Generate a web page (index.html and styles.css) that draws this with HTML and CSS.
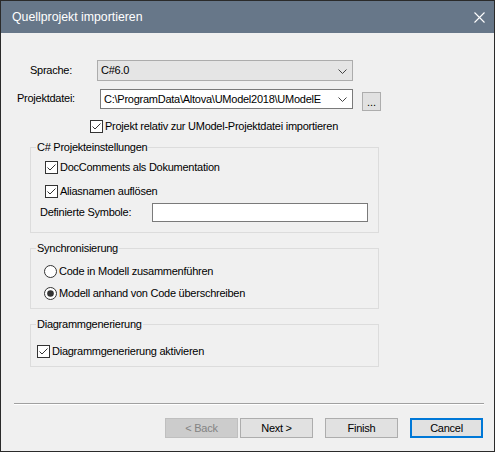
FILE: index.html
```html
<!DOCTYPE html>
<html lang="de">
<head>
<meta charset="utf-8">
<title>Quellprojekt importieren</title>
<link rel="stylesheet" href="styles.css">
</head>
<body>
<div class="window">
  <div class="titlebar">
    <span class="title">Quellprojekt importieren</span>
    <svg class="close" width="11" height="11" viewBox="0 0 11 11"><path d="M0.5 0.5 L10.5 10.5 M10.5 0.5 L0.5 10.5" stroke="#fff" stroke-width="1.1" fill="none"/></svg>
  </div>
  <div class="content">
    <div class="row row-lang">
      <span class="lbl lbl-lang">Sprache:</span>
      <div class="combo combo-lang">
        <span class="combo-text">C#6.0</span>
        <svg class="chev" width="9" height="5" viewBox="0 0 9 5"><path d="M0.5 0.5 L4.5 4.5 L8.5 0.5" stroke="#444" stroke-width="1" fill="none"/></svg>
      </div>
    </div>
    <div class="row row-file">
      <span class="lbl lbl-file">Projektdatei:</span>
      <div class="combo combo-file">
        <span class="combo-text">C:\ProgramData\Altova\UModel2018\UModelE</span>
        <svg class="chev" width="9" height="5" viewBox="0 0 9 5"><path d="M0.5 0.5 L4.5 4.5 L8.5 0.5" stroke="#444" stroke-width="1" fill="none"/></svg>
      </div>
      <span class="btn btn-browse">...</span>
    </div>
    <div class="check check-relative">
      <svg class="cb" width="13" height="13" viewBox="0 0 13 13"><rect x="0.5" y="0.5" width="12" height="12" fill="#fff" stroke="#333"/><path d="M2.5 6.5 L5 9 L10.5 3.5" stroke="#333" stroke-width="1" fill="none"/></svg>
      <span>Projekt relativ zur UModel-Projektdatei importieren</span>
    </div>

    <fieldset class="group group-cs">
      <legend>C# Projekteinstellungen</legend>
      <div class="group-body body-cs">
        <div class="check check-indent">
          <svg class="cb" width="13" height="13" viewBox="0 0 13 13"><rect x="0.5" y="0.5" width="12" height="12" fill="#fff" stroke="#333"/><path d="M2.5 6.5 L5 9 L10.5 3.5" stroke="#333" stroke-width="1" fill="none"/></svg>
          <span>DocComments als Dokumentation</span>
        </div>
        <div class="check check-indent check-second">
          <svg class="cb" width="13" height="13" viewBox="0 0 13 13"><rect x="0.5" y="0.5" width="12" height="12" fill="#fff" stroke="#333"/><path d="M2.5 6.5 L5 9 L10.5 3.5" stroke="#333" stroke-width="1" fill="none"/></svg>
          <span>Aliasnamen auflösen</span>
        </div>
        <div class="row row-symbols">
          <span class="lbl lbl-symbols">Definierte Symbole:</span>
          <div class="textbox"></div>
        </div>
      </div>
    </fieldset>

    <fieldset class="group group-sync">
      <legend>Synchronisierung</legend>
      <div class="group-body body-sync">
        <div class="check">
          <svg class="cb" width="13" height="13" viewBox="0 0 13 13"><circle cx="6.5" cy="6.5" r="6" fill="#fff" stroke="#333"/></svg>
          <span>Code in Modell zusammenführen</span>
        </div>
        <div class="check check-radio2">
          <svg class="cb" width="13" height="13" viewBox="0 0 13 13"><circle cx="6.5" cy="6.5" r="6" fill="#fff" stroke="#333"/><circle cx="6.5" cy="6.5" r="3.3" fill="#333"/></svg>
          <span>Modell anhand von Code überschreiben</span>
        </div>
      </div>
    </fieldset>

    <fieldset class="group group-diag">
      <legend>Diagrammgenerierung</legend>
      <div class="group-body body-diag">
        <div class="check">
          <svg class="cb" width="13" height="13" viewBox="0 0 13 13"><rect x="0.5" y="0.5" width="12" height="12" fill="#fff" stroke="#333"/><path d="M2.5 6.5 L5 9 L10.5 3.5" stroke="#333" stroke-width="1" fill="none"/></svg>
          <span>Diagrammgenerierung aktivieren</span>
        </div>
      </div>
    </fieldset>

    <div class="separator"></div>

    <div class="buttons">
      <span class="btn btn-action btn-disabled">&lt; Back</span>
      <span class="btn btn-action btn-next">Next &gt;</span>
      <span class="btn btn-action btn-finish">Finish</span>
      <span class="btn btn-action btn-default">Cancel</span>
    </div>
  </div>
</div>
</body>
</html>
```

FILE: styles.css
```css
html, body {
  margin: 0;
  padding: 0;
  background: #ffffff;
}

body {
  font-family: "Liberation Sans", Arial, sans-serif;
  font-size: 11px;
  letter-spacing: -0.25px;
  color: #000;
}

.window {
  box-sizing: border-box;
  width: 495px;
  height: 452px;
  border: 1px solid #2a2a2a;
  background: #f0f0f0;
  display: flex;
  flex-direction: column;
}

.titlebar {
  height: 32px;
  background: #677789;
  display: flex;
  align-items: center;
  justify-content: space-between;
  padding: 0 9px 0 11px;
  flex-shrink: 0;
}

.title {
  color: #fff;
  font-size: 12.3px;
  letter-spacing: 0;
  line-height: 32px;
}

.close {
  display: block;
  margin-top: 1px;
}

.content {
  display: flex;
  flex-direction: column;
  flex: 1;
}

.row {
  display: flex;
  align-items: center;
}

.lbl {
  line-height: 13px;
  white-space: nowrap;
}

.row-lang {
  margin-top: 27px;
}

.lbl-lang {
  margin-left: 29px;
  width: 67px;
}

.row-file {
  margin-top: 8px;
  align-items: flex-start;
  height: 21px;
}

.lbl-file {
  margin-left: 16px;
  width: 83px;
  margin-top: 3px;
}

.combo {
  box-sizing: border-box;
  display: flex;
  align-items: center;
  justify-content: space-between;
  padding: 0 5px 0 3px;
}

.combo-lang {
  width: 256px;
  height: 21px;
  background: #e5e5e5;
  border: 1px solid #acacac;
}

.combo-file {
  width: 253px;
  height: 20px;
  background: #fff;
  border: 1px solid #7a7a7a;
}

.combo-text {
  line-height: 13px;
  white-space: nowrap;
}

.chev {
  display: block;
  flex-shrink: 0;
  margin-top: 1px;
}

.btn {
  box-sizing: border-box;
  display: flex;
  align-items: center;
  justify-content: center;
  background: #e1e1e1;
  border: 1px solid #adadad;
  white-space: nowrap;
}

.btn-browse {
  width: 19px;
  height: 19px;
  margin-left: 9px;
  margin-top: 3px;
  align-items: flex-end;
  padding-bottom: 2px;
  letter-spacing: 0;
  line-height: 11px;
}

.check {
  display: flex;
  align-items: center;
  height: 13px;
  line-height: 13px;
  white-space: nowrap;
}

.cb {
  display: block;
  flex-shrink: 0;
  margin-right: 2px;
}

.check-relative {
  margin-top: 10px;
  margin-left: 89px;
}

.group {
  box-sizing: border-box;
  width: 349px;
  margin: 0 0 0 29px;
  padding: 0;
  border: 1px solid #dcdcdc;
  min-inline-size: 0;
}

.group legend {
  margin-left: 5px;
  padding: 0 1px;
  line-height: 15px;
  height: 15px;
}

.group-cs {
  margin-top: 7px;
}

.group-sync,
.group-diag {
  margin-top: 8px;
}

.body-cs {
  padding: 6px 0 10px 9px;
}

.check-indent {
  margin-left: 5px;
}

.check-second {
  margin-top: 11px;
}

.row-symbols {
  margin-top: 5px;
}

.lbl-symbols {
  width: 112px;
}

.textbox {
  box-sizing: border-box;
  width: 216px;
  height: 19px;
  background: #fff;
  border: 1px solid #7a7a7a;
}

.body-sync {
  padding: 9px 0 8px 13px;
}

.check-radio2 {
  margin-top: 9px;
}

.body-diag {
  padding: 13px 0 8px 6px;
}

.separator {
  margin: 36px 0 0 13px;
  width: 470px;
  height: 1px;
  background: #a0a0a0;
  border-bottom: 1px solid #ffffff;
}

.buttons {
  margin-top: 13px;
  display: flex;
  justify-content: flex-end;
  padding-right: 11px;
}

.btn-action {
  width: 73px;
  height: 20px;
  line-height: 13px;
}

.btn-disabled {
  background: #cccccc;
  border-color: #bfbfbf;
  color: #838383;
}

.btn-next {
  margin-left: 2px;
}

.btn-finish {
  margin-left: 12px;
}

.btn-default {
  margin-left: 12px;
  border: 2px solid #0078d7;
}
```
